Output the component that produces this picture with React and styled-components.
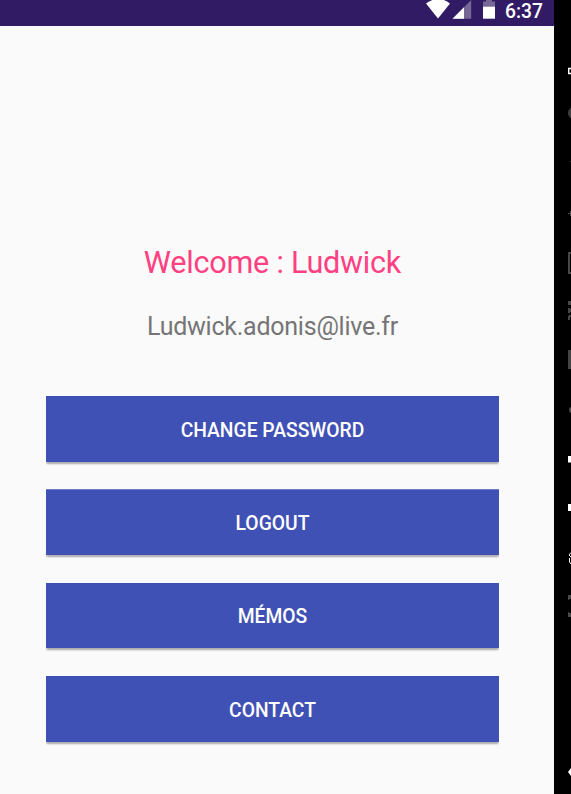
import React from "react";
import styled, { createGlobalStyle } from "styled-components";

const Global = createGlobalStyle`
  * { box-sizing: border-box; }
  body { margin: 0; background: #000; font-family: Roboto, sans-serif; overflow: hidden; }
`;

const Window = styled.div`
  display: flex;
  width: 571px;
  height: 794px;
  overflow: hidden;
  background: #000;
`;

const Screen = styled.main`
  display: flex;
  flex-direction: column;
  width: 554px;
  background: #fafafa;
`;

const StatusBar = styled.header`
  display: flex;
  justify-content: flex-end;
  height: 26px;
  padding-right: 11px;
  background: #311b64;
`;

const StatusIcons = styled.svg`
  display: block;
  width: 72px;
  height: 26px;
  margin-right: 7px;
`;

const Clock = styled.time`
  padding-top: 1px;
  font-size: 19.3px;
  font-weight: 500;
  line-height: 21px;
  color: #fff;
`;

const Content = styled.section`
  display: flex;
  flex-direction: column;
  align-items: center;
  width: 545px;
  padding: 218px 46px 0;
`;

const Title = styled.h1`
  margin: 0;
  font-size: 30.6px;
  font-weight: 400;
  line-height: 38px;
  letter-spacing: -0.24px;
  white-space: nowrap;
  color: #ff4081;
`;

const Email = styled.p`
  margin: 30px 0 0;
  font-size: 25px;
  font-weight: 400;
  line-height: 30px;
  letter-spacing: -0.24px;
  white-space: nowrap;
  color: #757575;
`;

const Actions = styled.nav`
  display: flex;
  flex-direction: column;
  gap: 27.6px;
  width: 453px;
  margin-top: 54px;
`;

const ActionButton = styled.button`
  height: 65.75px;
  padding: 2.5px 0 0;
  border: 0;
  background: #3f51b5;
  box-shadow: 0 3px 2px -1px rgba(0, 0, 0, 0.24), 0 2px 1px rgba(0, 0, 0, 0.1);
  clip-path: inset(0 0 -6px 0);
  font-family: inherit;
  font-size: 19.3px;
  font-weight: 500;
  text-transform: uppercase;
  color: #fff;
`;

const Toolbar = styled.aside`
  display: flex;
  flex-direction: column;
  align-items: flex-end;
  width: 17px;
  background: #000;
`;

const ToolIcon = styled.svg`
  display: block;
  flex: none;
  width: 3px;
  height: ${({ $height }) => $height}px;
  margin-top: ${({ $gap }) => $gap}px;
`;

const tools = [
  { id: "power", gap: 67, height: 8, art: <path d="M4 1.5H.7v5H4" fill="none" stroke="#fff" strokeWidth="1.4" /> },
  { id: "volume", gap: 32, height: 12, art: <circle cx="6" cy="6" r="6" fill="#404040" /> },
  { id: "rotate-left", gap: 41, height: 3, art: <path d="M2 1h1v1H2z" fill="#333" /> },
  { id: "rotate-right", gap: 48, height: 5, art: <path d="M0 2h2V0h1v5H2V3H0z" fill="#484848" /> },
  { id: "camera", gap: 36, height: 22, art: <path d="M4 1H1v20H4" fill="none" stroke="#484848" strokeWidth="2" /> },
  { id: "zoom", gap: 27, height: 19, art: <path d="M0 0h3v4H0zM0 7h2v1h1v3H2v1H0zM0 15h1v-1h2v2H2v3H0z" fill="#484848" /> },
  { id: "overview", gap: 30, height: 19, art: <path d="M0 0h3v19H0z" fill="#444" /> },
  { id: "record", gap: 38, height: 6, art: <circle cx="4" cy="3" r="3" fill="#484848" /> },
  { id: "back", gap: 43, height: 7, art: <path d="M0 0h3v6.5H0z" fill="#fff" /> },
  { id: "home", gap: 41, height: 7, art: <path d="M0 0h3v7H0z" fill="#fff" /> },
  { id: "fingerprint", gap: 41, height: 12, art: <path d="M3 .5L1 3l2 2M1.5 6v4L3 12" fill="none" stroke="#eee" strokeWidth="1" /> },
  { id: "resize", gap: 31, height: 22, art: <path d="M0 0h3v4H1v1H0zM0 17h1v1h2v4H0z" fill="#484848" /> },
  { id: "more", gap: 151, height: 8, art: <path d="M3 0v8L0 4z" fill="#fff" /> },
];

const actions = ["Change password", "Logout", "Mémos", "Contact"];

export default function App() {
  return (
    <Window>
      <Global />
      <Screen>
        <StatusBar>
          <StatusIcons viewBox="0 0 72 26">
            <path d="M0 3.6Q12.5-5.8 24 3.6L12 18.5z" fill="#fff" />
            <path d="M26.5 18.7L45.2 0v18.7z" fill="#766797" />
            <path d="M26.5 18.7L38 7.2v11.5z" fill="#fff" />
            <path d="M57 1.5h3V0h6v1.5h3V7H57z" fill="#766797" />
            <path d="M57 6.7h12v12H57z" fill="#fff" />
          </StatusIcons>
          <Clock>6:37</Clock>
        </StatusBar>
        <Content>
          <Title>Welcome : Ludwick</Title>
          <Email>Ludwick.adonis@live.fr</Email>
          <Actions>
            {actions.map((label) => (
              <ActionButton key={label}>{label}</ActionButton>
            ))}
          </Actions>
        </Content>
      </Screen>
      <Toolbar>
        {tools.map(({ id, gap, height, art }) => (
          <ToolIcon key={id} $gap={gap} $height={height} viewBox={`0 0 3 ${height}`}>
            {art}
          </ToolIcon>
        ))}
      </Toolbar>
    </Window>
  );
}
